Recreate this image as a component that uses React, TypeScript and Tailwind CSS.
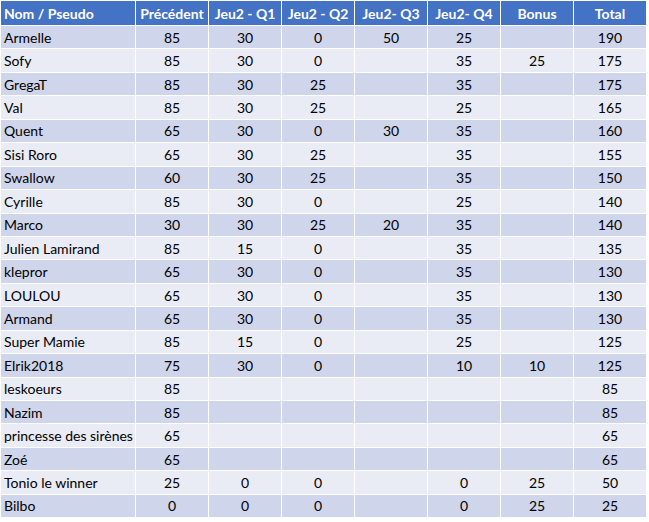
const headers = ['Nom / Pseudo', 'Précédent', 'Jeu2 - Q1', 'Jeu2 - Q2', 'Jeu2- Q3', 'Jeu2- Q4', 'Bonus', 'Total'];

const rows: (string | number)[][] = [
  ['Armelle', 85, 30, 0, 50, 25, '', 190],
  ['Sofy', 85, 30, 0, '', 35, 25, 175],
  ['GregaT', 85, 30, 25, '', 35, '', 175],
  ['Val', 85, 30, 25, '', 25, '', 165],
  ['Quent', 65, 30, 0, 30, 35, '', 160],
  ['Sisi Roro', 65, 30, 25, '', 35, '', 155],
  ['Swallow', 60, 30, 25, '', 35, '', 150],
  ['Cyrille', 85, 30, 0, '', 25, '', 140],
  ['Marco', 30, 30, 25, 20, 35, '', 140],
  ['Julien Lamirand', 85, 15, 0, '', 35, '', 135],
  ['klepror', 65, 30, 0, '', 35, '', 130],
  ['LOULOU', 65, 30, 0, '', 35, '', 130],
  ['Armand', 65, 30, 0, '', 35, '', 130],
  ['Super Mamie', 85, 15, 0, '', 25, '', 125],
  ['Elrik2018', 75, 30, 0, '', 10, 10, 125],
  ['leskoeurs', 85, '', '', '', '', '', 85],
  ['Nazim', 85, '', '', '', '', '', 85],
  ['princesse des sirènes', 65, '', '', '', '', '', 65],
  ['Zoé', 65, '', '', '', '', '', 65],
  ['Tonio le winner', 25, 0, 0, '', 0, 25, 50],
  ['Bilbo', 0, 0, 0, '', 0, 25, 25],
];

export default function App() {
  return (
    <div className="w-[649px] h-[522px] bg-white p-px" style={{ fontFamily: 'Lato, "Noto Sans", sans-serif' }}>
      <div className="grid grid-cols-[134px_repeat(7,72px)] grid-rows-[24px] auto-rows-[22.45px] gap-px text-[14px] text-black">
        {headers.map((h, i) => (
          <div
            key={h}
            className={`bg-[#4472c4] text-white font-bold flex items-center ${i === 0 ? 'pl-[3px]' : 'justify-center'}`}
          >
            {h}
          </div>
        ))}
        {rows.map((r, ri) =>
          r.map((c, ci) => (
            <div
              key={`${ri}-${ci}`}
              className={`flex items-center ${ri % 2 === 0 ? 'bg-[#cfd5ea]' : 'bg-[#e9ebf5]'} ${ci === 0 ? 'pl-[3px]' : 'justify-center'}`}
            >
              {c}
            </div>
          ))
        )}
      </div>
    </div>
  );
}
